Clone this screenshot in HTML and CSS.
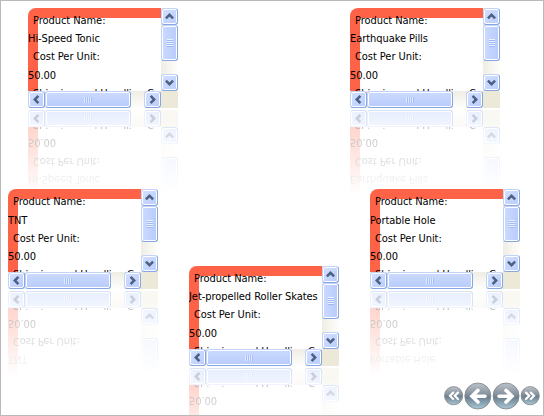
FILE: index.html
```html
<!DOCTYPE html>
<html lang="en">
<head>
<meta charset="utf-8">
<title>Product carousel</title>
<link rel="stylesheet" href="styles.css">
</head>
<body>
<main class="stage">
  <div class="carousel" id="carousel"></div>
  <nav class="nav">
    <svg width="96" height="30" viewBox="0 0 96 30">
      <defs>
        <linearGradient id="ball" x1="0" y1="0" x2="0" y2="1">
          <stop offset="0" stop-color="#bcc3c9"/>
          <stop offset=".4" stop-color="#8b96a2"/>
          <stop offset=".55" stop-color="#6d7f8e"/>
          <stop offset="1" stop-color="#a9c9d6"/>
        </linearGradient>
      </defs>
      <g fill="url(#ball)" stroke="#7d8389" stroke-width=".8">
        <circle cx="9.6" cy="14.7" r="9.1"/>
        <circle cx="33.8" cy="15" r="13"/>
        <circle cx="62.1" cy="15" r="13"/>
        <circle cx="86.2" cy="14.7" r="9.1"/>
      </g>
      <g fill="none" stroke="#fff" stroke-width="2.2" stroke-linecap="round">
        <path d="M9.2 11.6 6 14.8l3.2 3.2M14 11.6l-3.2 3.2 3.2 3.2"/>
        <path d="M82 11.6l3.2 3.2-3.2 3.2M86.8 11.6l3.2 3.2-3.2 3.2"/>
        <path stroke-width="3.6" d="M34 9.4 28 15.2l6 5.8M28.6 15.2h12.4"/>
        <path stroke-width="3.6" d="M62 9.4l6 5.8-6 5.8M67.4 15.2H55"/>
      </g>
    </svg>
  </nav>
</main>
<template id="card">
  <div class="view">
    <div class="form">
      <div class="label">Product Name:</div>
      <div class="value name"></div>
      <div class="label">Cost Per Unit:</div>
      <div class="value">50.00</div>
      <div class="label">Shipping and Handling C</div>
    </div>
    <div class="vbar">
      <div class="btn"><svg width="9" height="9" viewBox="0 0 9 9"><path d="M.9 6.4 4.5 2.8 8.1 6.4"/></svg></div>
      <div class="thumb tall"><i class="grip rows"></i></div>
      <div class="gap"></div>
      <div class="btn"><svg width="9" height="9" viewBox="0 0 9 9"><path d="M.9 2.6 4.5 6.2 8.1 2.6"/></svg></div>
    </div>
    <div class="hbar">
      <div class="btn"><svg width="9" height="9" viewBox="0 0 9 9"><path d="M6.4 .9 2.8 4.5 6.4 8.1"/></svg></div>
      <div class="thumb wide"><i class="grip cols"></i></div>
      <div class="gap"></div>
      <div class="btn"><svg width="9" height="9" viewBox="0 0 9 9"><path d="M2.6 .9 6.2 4.5 2.6 8.1"/></svg></div>
    </div>
    <div class="corner"></div>
  </div>
</template>
<script src="carousel.js"></script>
</body>
</html>
```
FILE: styles.css
```css
body { margin: 0; background: #fff; }
.stage {
  position: relative;
  box-sizing: border-box;
  width: 544px;
  height: 416px;
  border: 1px solid #bababa;
  overflow: hidden;
  font: 11px/18px "DejaVu Sans Condensed", "DejaVu Sans", sans-serif;
  letter-spacing: -.06px;
  color: #000;
}
.item { position: absolute; width: 150px; }
.view {
  display: grid;
  grid-template: 83px 17px / 133px 17px;
  width: 150px;
  height: 100px;
}
.form {
  box-sizing: border-box;
  overflow: hidden;
  border-top-left-radius: 8px;
  background: linear-gradient(#ff6347, #ff6347) 0 0 / 100% 10px no-repeat,
              linear-gradient(#ff6347, #ff6347) 0 0 / 10px 100% no-repeat, #fff;
  padding-top: 4px;
  white-space: nowrap;
}
.lowered .form { padding-top: 4.4px; }
.form div { height: 18.2px; }
.label { padding-left: 5px; }
.mirror {
  margin-top: 2px;
  transform: scaleY(-1);
  -webkit-mask-image: linear-gradient(to top, rgba(0,0,0,.34), rgba(0,0,0,0) 84%);
  mask-image: linear-gradient(to top, rgba(0,0,0,.34), rgba(0,0,0,0) 84%);
}
.vbar, .hbar { display: flex; }
.vbar { flex-direction: column; background: linear-gradient(to right, #efede4, #fefefb); }
.hbar { background: linear-gradient(#efede4, #fefefb); }
.corner { background: #ece9d8; }
.gap { flex: 1; }
.btn, .thumb {
  box-sizing: border-box;
  display: flex;
  align-items: center;
  justify-content: center;
  flex: none;
  border: 1px solid #c3d3f8;
  border-right-color: #86a6e4;
  border-bottom-color: #86a6e4;
  border-radius: 3px;
  background: linear-gradient(135deg, #d3e0ff, #b9cdfb);
  box-shadow: inset 0 0 0 1px #fff;
}
.btn { width: 17px; height: 17px; }
.btn svg { fill: none; stroke: #4d6185; stroke-width: 2.5; }
.tall { height: 36px; width: 17px; background: linear-gradient(to right, #cbdafe, #b8cbfb); }
.wide { width: 86px; height: 17px; background: linear-gradient(#cbdafe, #b8cbfb); }
.grip { display: block; }
.rows { width: 6px; height: 8px; background: repeating-linear-gradient(#eef4ff 0 1px, #9db8f5 1px 2px); }
.cols { width: 8px; height: 6px; background: repeating-linear-gradient(to right, #dfe9ff 0 1px, #a9c0f8 1px 2px); }
.nav { position: absolute; left: 443px; top: 380px; }
.nav svg { display: block; }
```
FILE: carousel.js
```js
const items = [
  ["Hi-Speed Tonic", 28, 8],
  ["Earthquake Pills", 350, 8],
  ["TNT", 8, 189],
  ["Portable Hole", 370, 189],
  ["Jet-propelled Roller Skates", 189, 266]
];
const root = document.getElementById("carousel");
const card = document.getElementById("card");
for (const [name, x, y] of items) {
  const item = document.createElement("div");
  item.className = y === 189 ? "item lowered" : "item";
  item.style.left = x - 1 + "px";
  item.style.top = y - 1 + "px";
  const view = card.content.firstElementChild.cloneNode(true);
  view.querySelector(".name").textContent = name;
  const mirror = view.cloneNode(true);
  mirror.classList.add("mirror");
  mirror.setAttribute("aria-hidden", "true");
  item.append(view, mirror);
  root.append(item);
}
```
